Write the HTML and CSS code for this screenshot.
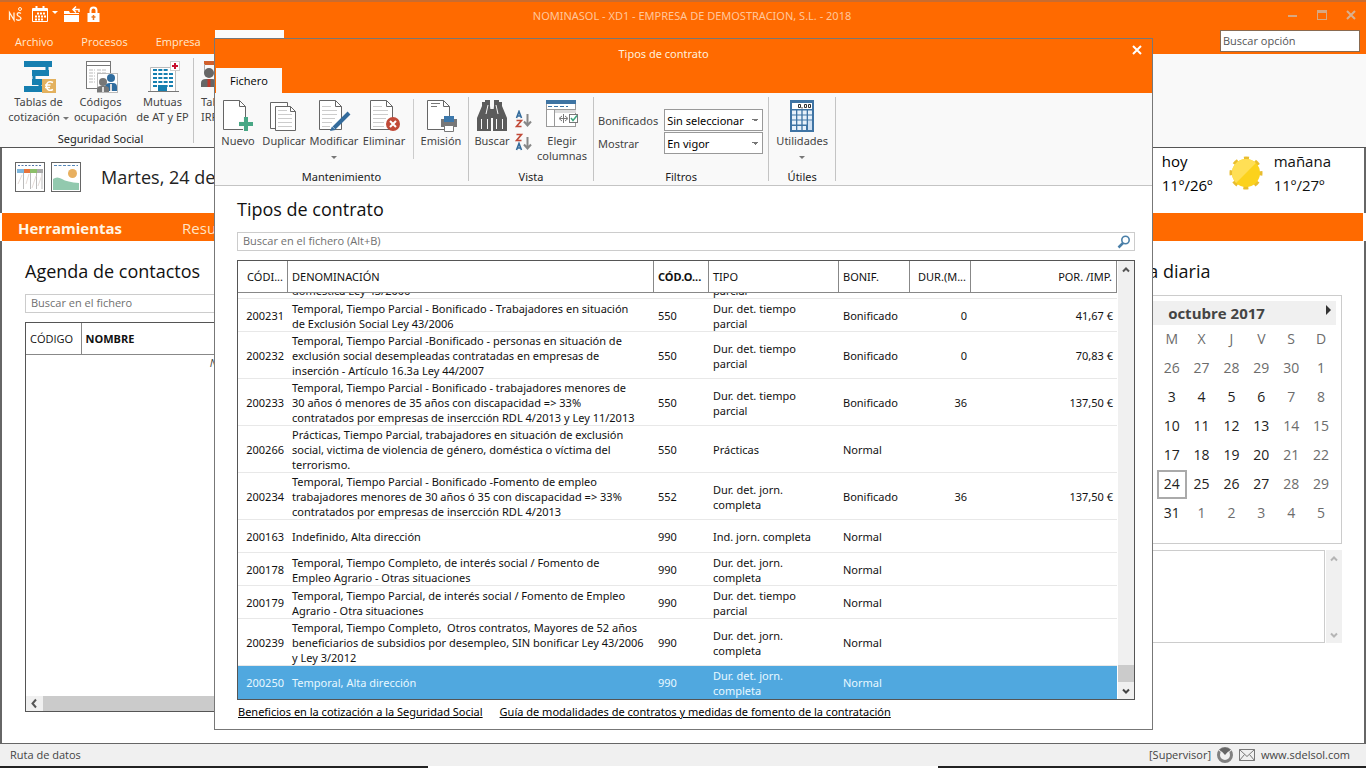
FILE: index.html
```html
<!DOCTYPE html>
<html lang="es">
<head>
<meta charset="utf-8">
<title>NOMINASOL - XD1 - EMPRESA DE DEMOSTRACION, S.L. - 2018</title>
<link rel="stylesheet" href="styles.css">
</head>
<body>
<div class="app">
  <header class="titlebar">
    <div class="quick">
      <svg width="16" height="18" viewBox="0 0 16 18" fill="none" stroke="#fff3df" stroke-width="1.3"><path d="M1.500 14V6.500L6 14V6.500M13 7.500C10 5.500 8 8 10 9.800C12 11 14 12 12.500 13.500C11 14.600 9 14 8.200 13.200"/><circle cx="12" cy="3" r="1.500" stroke-width="1"/></svg>
      <svg width="26" height="18" viewBox="0 0 26 18" fill="none" stroke="#fff"><path d="M.5 2.500h15v13H.5z"/><path d="M1 4h14M4.500 0v4M11.500 0v4" stroke-width="2"/><path d="M5 7.500h9M3 10.500h11M3 13.500h9" stroke-width="2" stroke-dasharray="2 1"/><path d="M20 5h6l-3 3z" fill="#fff" stroke="none"/></svg>
      <svg width="17" height="18" viewBox="0 0 17 18" fill="#fff"><path d="M0 16V5h5l1 2h9v9z"/><path d="M0 8.500h15" stroke="#ff6a00"/><path d="M15 6V3.500h-5M12 .5l-3 3 3 3" fill="none" stroke="#fff" stroke-width="1.500"/></svg>
      <svg width="13" height="18" viewBox="0 0 13 18"><path d="M3.500 8V4.500a3 3 0 0 1 6 0V8" fill="none" stroke="#fff" stroke-width="2"/><rect x="0.500" y="7" width="12" height="9" fill="#fff"/><path d="M6.500 9v5M4.500 11h4" stroke="#e87722" stroke-width="1.500"/></svg>
    </div>
    <h1 class="app-title">NOMINASOL - XD1 - EMPRESA DE DEMOSTRACION, S.L. - 2018</h1>
    <div class="win-buttons">
      <button type="button" aria-label="Minimizar"><svg width="10" height="10" viewBox="0 0 10 10"><path d="M0 6h9" stroke="#d8a882" stroke-width="2"/></svg></button>
      <button type="button" aria-label="Maximizar"><svg width="10" height="10" viewBox="0 0 10 10"><rect x=".5" y=".5" width="9" height="9" fill="none" stroke="#d8a882"/><path d="M0 1.500h10" stroke="#d8a882" stroke-width="3"/></svg></button>
      <button type="button" aria-label="Cerrar"><svg width="10" height="10" viewBox="0 0 10 10"><path d="M1 1l8 8M9 1l-8 8" stroke="#d8b090" stroke-width="2"/></svg></button>
    </div>
  </header>
  <nav class="menu">
    <a href="#">Archivo</a><a href="#">Procesos</a><a href="#">Empresa</a><a href="#" class="on">Entorno</a><a href="#">Impresión</a><a href="#">Utilidades</a><a href="#">Mi Asesoría</a><a href="#">Tienda</a>
    <input class="option-search" type="text" aria-label="Buscar opción" placeholder="Buscar opción">
  </nav>
  <section class="ribbon main-ribbon">
    <div class="group">
      <div class="tools">
        <button type="button" class="tool wide">
          <svg width="34" height="34" viewBox="0 0 34 34"><path d="M2 1h28v6H2zM10 10h17v6H10zM10 19h16v6H10zM2 26h18v6H2z" fill="#167fb0"/><path d="M25 7v3M12 16v3M18 25v2" stroke="#167fb0" stroke-width="3"/><rect x="20" y="19" width="14" height="14" fill="#e3b15e"/><path d="M31 22.500c-4-2-6.500 0-6.500 3.500s2.500 5.500 6.500 3.500M23 25h5.500M23 27.500h5" fill="none" stroke="#fff" stroke-width="1.500"/></svg>
          <span>Tablas de<br>cotización <i class="arrow"></i></span></button>
        <button type="button" class="tool wide">
          <svg width="34" height="34" viewBox="0 0 34 34"><rect x="2.500" y="1.500" width="24" height="27" fill="#fff" stroke="#777"/><path d="M3 5.500h23" stroke="#777"/><path d="M5 10h6M5 13h6M5 16h6M5 19h6M5 22h6M13 10h10M13 13h10M13 16h6" stroke="#bbb" stroke-dasharray="4 1"/><rect x="13.500" y="13.500" width="20" height="19" fill="#fff" stroke="#bbb"/><circle cx="27" cy="18" r="4" fill="#2f6c9e"/><path d="M21 31v-5q1-3 5-3h3q4 0 4 4v4z" fill="#2f6c9e"/><circle cx="19" cy="22" r="4" fill="#777"/><path d="M13 32v-3q0-3 4-3h4q4 0 4 3v3z" fill="#777"/><path d="M19 27v5M27 24v7" stroke="#ddd" stroke-width="2"/></svg>
          <span>Códigos<br>ocupación</span></button>
        <button type="button" class="tool wide">
          <svg width="34" height="34" viewBox="0 0 34 34"><path d="M4.500 31V7.500h25V31" fill="#fff" stroke="#bbb"/><path d="M7 10h15M7 14h20M7 18h20M7 22h20M7 26h20" stroke="#167fb0" stroke-width="2" stroke-dasharray="4 1.330"/><path d="M12 25h9v6h-9z" fill="#167fb0"/><path d="M2 31.500h31" stroke="#777"/><rect x="24.500" y="1.500" width="9" height="9" fill="#fff" stroke="#ccc"/><path d="M29 3v6M26 6h6" stroke="#c8102e" stroke-width="2"/></svg>
          <span>Mutuas<br>de AT y EP</span></button>
      </div>
      <div class="group-name">Seguridad Social</div>
    </div>
    <div class="group">
      <div class="tools">
        <button type="button" class="tool mid left">
          <svg width="34" height="34" viewBox="0 0 34 34"><path d="M3 1h29v4H3z" fill="#d0602c"/><path d="M3.500 4v9M31.500 4v28" stroke="#aaa"/><circle cx="8" cy="13" r="5" fill="#666"/><path d="M0 27v-4q0-4 5-4h6q5 0 5 4v4z" fill="#666"/><path d="M8 19v8" stroke="#c0392b" stroke-width="3"/></svg>
          <span>Tablas<br>IRPF</span></button>
      </div>
      <div class="group-name"></div>
    </div>
  </section>
  <section class="daybar">
    <button type="button" class="pic" aria-label="Calendario"><svg width="30" height="30" viewBox="0 0 30 30"><rect x=".5" y=".5" width="29" height="29" fill="#fff" stroke="#666"/><path d="M3 3.500h24" stroke="#57a" stroke-dasharray="2 1.500"/><path d="M2 7h7v4H2z" fill="#7db6dd"/><path d="M9 7h6v4H9z" fill="#e8743a"/><path d="M15 7h7v4h-7z" fill="#8cbf6a"/><path d="M22 7h6v4h-6z" fill="#aaa"/><path d="M8.500 11v16M15.500 11v16M21.500 11v16M27 11v16" stroke="#bbb"/><path d="M3 22l4-9M11 22l3-10M17 26l4-12M23 24l4-11" stroke="#e5dcd8"/></svg></button>
    <button type="button" class="pic" aria-label="Imagen"><svg width="30" height="30" viewBox="0 0 30 30"><rect x=".5" y=".5" width="29" height="29" fill="#fff" stroke="#666"/><path d="M3 3.500h24" stroke="#58b" stroke-dasharray="3 1.500"/><circle cx="21.500" cy="11.500" r="4.500" fill="#e8b060"/><path d="M2 28V17q4-3 9 0t17 4v7z" fill="#92c9ae"/></svg></button>
    <h2 class="date">Martes, 24 de octubre de 2017</h2>
    <div class="weather">
      <p class="today">hoy<br>11º/26º</p>
      <svg width="34" height="34" viewBox="0 0 34 34"><circle cx="17" cy="17" r="14.500" fill="none" stroke="#e9bd2e" stroke-width="4" stroke-dasharray="5 6.390" stroke-dashoffset="2.500"/><circle cx="17" cy="17" r="14" fill="#fcd21c"/><path d="M7.100 26.900A14 14 0 0 1 26.900 7.100z" fill="#ffdf55"/></svg>
      <p>mañana<br>11º/27º</p>
    </div>
  </section>
  <nav class="sections"><a href="#" class="on">Herramientas</a><a href="#">Resumen</a></nav>
  <main class="desk">
    <section class="contacts">
      <h2>Agenda de contactos</h2>
      <input class="file-search" type="text" aria-label="Buscar contactos" placeholder="Buscar en el fichero">
      <div class="contact-grid">
        <table>
          <thead><tr><th class="code">CÓDIGO</th><th class="strong">NOMBRE</th></tr></thead>
          <tbody><tr><td colspan="2">No existen contactos</td></tr></tbody>
        </table>
        <div class="hbar"><svg width="17" height="15" viewBox="0 0 17 15"><path d="M10 3.500L6.500 7.500l3.500 4" fill="none" stroke="#555" stroke-width="2"/></svg><div class="hthumb"></div></div>
      </div>
    </section>
    <section class="diary">
      <h2>Agenda diaria</h2>
      <div class="calendar">
        <div class="month"><span>octubre 2017</span><button type="button" aria-label="Mes siguiente"><svg width="6" height="16" viewBox="0 0 6 16"><path d="M0 0v10l5-5z" fill="#333"/></svg></button></div>
        <table>
          <thead><tr><th></th><th>L</th><th>M</th><th>X</th><th>J</th><th>V</th><th>S</th><th>D</th></tr></thead>
          <tbody>
            <tr class="out"><td>39</td><td>25</td><td>26</td><td>27</td><td>28</td><td>29</td><td>30</td><td>1</td></tr>
            <tr><td>40</td><td>2</td><td>3</td><td>4</td><td>5</td><td>6</td><td>7</td><td>8</td></tr>
            <tr><td>41</td><td>9</td><td>10</td><td>11</td><td>12</td><td>13</td><td>14</td><td>15</td></tr>
            <tr><td>42</td><td>16</td><td>17</td><td>18</td><td>19</td><td>20</td><td>21</td><td>22</td></tr>
            <tr><td>43</td><td>23</td><td class="now">24</td><td>25</td><td>26</td><td>27</td><td>28</td><td>29</td></tr>
            <tr class="last"><td>44</td><td>30</td><td>31</td><td>1</td><td>2</td><td>3</td><td>4</td><td>5</td></tr>
          </tbody>
        </table>
      </div>
      <div class="notes">
        <textarea aria-label="Notas del día"></textarea>
        <div class="vbar"><svg width="16" height="17" viewBox="0 0 16 17"><path d="M5 10.500L8 7.500l3 3" fill="none" stroke="#b5b5b5" stroke-width="2"/></svg><svg width="16" height="17" viewBox="0 0 16 17"><path d="M5 7.500l3 3 3-3" fill="none" stroke="#b5b5b5" stroke-width="2"/></svg></div>
      </div>
    </section>
  </main>
  <footer class="status">
    <span>Ruta de datos</span>
    <span class="user">[Supervisor]</span>
    <svg width="16" height="16" viewBox="0 0 16 16"><circle cx="8" cy="8" r="6.500" fill="none" stroke="#808080" stroke-width="3"/><path d="M3 2.500L8 8l5-5.500Q8-1 3 2.500z" fill="#666"/><path d="M1.500 2.500l3.500 4M14.500 2.500l-3.500 4" stroke="#f0f0f0"/></svg>
    <svg width="16" height="12" viewBox="0 0 16 12"><path d="M.5.5h15v11H.5zM.5.500L8 7.500l7.500-7M.5 11.500l5-6M15.500 11.500l-5-6" fill="none" stroke="#777"/></svg>
    <a href="#">www.sdelsol.com</a>
  </footer>
  <div class="taskbar"></div>
</div>

<div class="dialog" role="dialog" aria-labelledby="dialog-title">
  <header class="dialog-top">
    <h2 id="dialog-title">Tipos de contrato</h2>
    <button type="button" class="close" aria-label="Cerrar"><svg width="10" height="10" viewBox="0 0 10 10"><path d="M1 1l8 8M9 1l-8 8" stroke="#fff" stroke-width="2"/></svg></button>
  </header>
  <nav class="dialog-tabs"><a href="#">Fichero</a></nav>
  <section class="ribbon">
    <div class="group">
      <div class="tools">
        <button type="button" class="tool slim"><svg width="34" height="34" viewBox="0 0 34 34"><path d="M2.500 1.500h16l6 6v23h-22z" fill="#fff" stroke="#666"/><path d="M18.500 1.500v6h6" fill="none" stroke="#666"/><path d="M25 18v14M18 25h14" stroke="#f9f9f9" stroke-width="6"/><path d="M25 18v14M18 25h14" stroke="#48a785" stroke-width="4"/></svg><span>Nuevo</span></button>
        <button type="button" class="tool slim"><svg width="34" height="34" viewBox="0 0 34 34"><path d="M3.500 3.500h17v26h-17z" fill="#fff" stroke="#666"/><path d="M8.500 7.500h15l5 5v19h-20z" fill="#fff" stroke="#666"/><path d="M23.500 7.500v5h5" fill="none" stroke="#666"/><path d="M11 15.500h14M11 19.500h14M11 23.500h14M11 27.500h14M11 11.500h9" stroke="#ccc"/></svg><span>Duplicar</span></button>
        <button type="button" class="tool mid"><svg width="34" height="34" viewBox="0 0 34 34"><path d="M2.500 1.500h16l6 6v23h-22z" fill="#fff" stroke="#666"/><path d="M18.500 1.500v6h6" fill="none" stroke="#666"/><path d="M5 7.500h9M5 11.500h15M5 15.500h15M5 19.500h13M5 23.500h10M5 27.500h8" stroke="#ccc"/><path d="M32 14L17 29" stroke="#336b9c" stroke-width="4"/><path d="M15 27.500l3.500 3.500L13 32z" fill="#336b9c"/></svg><span>Modificar<br><i class="arrow"></i></span></button>
        <button type="button" class="tool slim"><svg width="34" height="34" viewBox="0 0 34 34"><path d="M3.500 1.500h16l6 6v23h-22z" fill="#fff" stroke="#666"/><path d="M19.500 1.500v6h6" fill="none" stroke="#666"/><path d="M6 7.500h9M6 11.500h15M6 15.500h15M6 19.500h13M6 23.500h11M6 27.500h11" stroke="#ccc"/><circle cx="26" cy="25" r="7" fill="#c14a38"/><path d="M23 22l6 6M29 22l-6 6" stroke="#fff" stroke-width="2"/></svg><span>Eliminar</span></button>
        <span class="line"></span>
        <button type="button" class="tool mid"><svg width="34" height="34" viewBox="0 0 34 34"><path d="M3.500 1.500h16l6 6v23h-22z" fill="#fff" stroke="#666"/><path d="M19.500 1.500v6h6" fill="none" stroke="#666"/><path d="M7 4.500h9M7 7.500h6" stroke="#777"/><path d="M17 20h16v8H17z" fill="#777"/><path d="M20 17h10v6H20z" fill="#3c78ab"/><path d="M20.500 26.500h9v6h-9z" fill="#fff" stroke="#777"/></svg><span>Emisión</span></button>
      </div>
      <div class="group-name">Mantenimiento</div>
    </div>
    <div class="group">
      <div class="tools view">
        <button type="button" class="tool slim"><svg width="34" height="34" viewBox="0 0 34 34" fill="#5b5b5b"><path d="M10 1h5v6l1 9v16H2V19L7 7V3h3zM19 1h5v2h3v4l5 12v13H18V16l1-9z"/><path d="M15 10h4v9h-4z"/><path d="M13 6l-2 9M21 6l2 9M6.500 20v10M12.500 20v10M21.500 20v10M27.500 20v10" stroke="#f9f9f9"/></svg><span>Buscar</span></button>
        <div class="sorts">
          <button type="button" aria-label="Orden ascendente"><svg width="18" height="18" viewBox="0 0 18 18" fill="none" stroke-width="1.600"><path d="M1.500 8L4 1.500 6.500 8M2.500 6h3" stroke="#336b9c"/><path d="M1.500 10.500h5l-5 6h5" stroke="#c14a38"/><path d="M12.500 4v11M9 11.500l3.500 4 3.500-4" stroke="#888" stroke-width="2"/></svg></button>
          <button type="button" aria-label="Orden descendente"><svg width="18" height="18" viewBox="0 0 18 18" fill="none" stroke-width="1.600"><path d="M1.500 1.500h5l-5 6h5" stroke="#c14a38"/><path d="M1.500 17L4 10.500 6.500 17M2.500 15h3" stroke="#336b9c"/><path d="M12.500 4v11M9 11.500l3.500 4 3.500-4" stroke="#888" stroke-width="2"/></svg></button>
        </div>
        <button type="button" class="tool mid"><svg width="34" height="34" viewBox="0 0 34 34"><rect x="1.500" y="1.500" width="29" height="26" fill="#fff" stroke="#999"/><path d="M1 1h30v4H1z" fill="#3e74a3"/><path d="M3 7.500h20" stroke="#3e74a3" stroke-dasharray="4 2"/><path d="M9 10h22v4H9z" fill="#ddd"/><path d="M1 10.500h30M9.500 11v16" stroke="#999"/><path d="M18.500 15v9M15 19.500h7M17 17l-3 2.500 3 2.500M20 17l3 2.500-3 2.500" fill="none" stroke="#777"/><rect x="24.500" y="15.500" width="8" height="8" fill="#fff" stroke="#777"/><path d="M26 19l2 2.500 4-5" fill="none" stroke="#3da37c" stroke-width="1.500"/></svg><span>Elegir<br>columnas</span></button>
      </div>
      <div class="group-name">Vista</div>
    </div>
    <div class="group">
      <div class="filters">
        <label for="bonus">Bonificados</label>
        <select id="bonus"><option>Sin seleccionar</option></select>
        <label for="show">Mostrar</label>
        <select id="show"><option>En vigor</option></select>
      </div>
      <div class="group-name">Filtros</div>
    </div>
    <div class="group">
      <div class="tools">
        <button type="button" class="tool util"><svg width="34" height="34" viewBox="0 0 34 34"><path d="M5 1h24v32H5z" fill="#3f74a4"/><path d="M7 4h20v6H7z" fill="#fff"/><path d="M13.500 5.500h2v3h-2zM19.500 5.500h2v3h-2zM23.500 5.500h2v3h-2z" fill="none" stroke="#333"/><path d="M17 8v1.500" stroke="#333"/><path d="M7 13.500h20M7 18.500h20M7 23.500h20M7 29h14" stroke="#e8f1fa" stroke-width="4" stroke-dasharray="4 1.330"/><path d="M23 22h4v9h-4z" fill="#cfe0f2"/></svg><span>Utilidades<br><i class="arrow"></i></span></button>
      </div>
      <div class="group-name">Útiles</div>
    </div>
  </section>
  <div class="dialog-body">
    <h2>Tipos de contrato</h2>
    <div class="search-row">
      <input type="text" aria-label="Buscar tipos de contrato" placeholder="Buscar en el fichero (Alt+B)">
      <svg width="14" height="14" viewBox="0 0 14 14" fill="none" stroke="#4a7fa8"><circle cx="8.500" cy="5" r="3.700" stroke-width="1.600"/><path d="M6 8L1.500 12.500" stroke-width="2.500"/></svg>
    </div>
    <div class="grid-frame">
      <div class="grid-scroll">
        <table class="grid">
          <colgroup><col class="c-code"><col><col class="c-off"><col class="c-type"><col class="c-bon"><col class="c-dur"><col class="c-imp"></colgroup>
          <thead><tr><th class="num">CÓDI...</th><th>DENOMINACIÓN</th><th class="strong">CÓD.O...</th><th>TIPO</th><th>BONIF.</th><th class="num">DUR.(M...</th><th class="num">POR. /IMP.</th></tr></thead>
          <tbody>
            <tr><td></td><td>Temporal, Tiempo Parcial - Bonificado - Violencia<br>doméstica Ley 43/2006</td><td></td><td>Dur. det. tiempo<br>parcial</td><td></td><td></td><td></td></tr>
            <tr><td class="num">200231</td><td>Temporal, Tiempo Parcial - Bonificado - Trabajadores en situación<br>de Exclusión Social Ley 43/2006</td><td>550</td><td>Dur. det. tiempo<br>parcial</td><td>Bonificado</td><td class="num">0</td><td class="num">41,67 €</td></tr>
            <tr><td class="num">200232</td><td>Temporal, Tiempo Parcial -Bonificado - personas en situación de<br>exclusión social desempleadas contratadas en empresas de<br>inserción - Artículo 16.3a Ley 44/2007</td><td>550</td><td>Dur. det. tiempo<br>parcial</td><td>Bonificado</td><td class="num">0</td><td class="num">70,83 €</td></tr>
            <tr><td class="num">200233</td><td>Temporal, Tiempo Parcial - Bonificado - trabajadores menores de<br>30 años ó menores de 35 años con discapacidad =&gt; 33%<br>contratados por empresas de insercción RDL 4/2013 y Ley 11/2013</td><td>550</td><td>Dur. det. tiempo<br>parcial</td><td>Bonificado</td><td class="num">36</td><td class="num">137,50 €</td></tr>
            <tr><td class="num">200266</td><td>Prácticas, Tiempo Parcial, trabajadores en situación de exclusión<br>social, victima de violencia de género, doméstica o víctima del<br>terrorismo.</td><td>550</td><td>Prácticas</td><td>Normal</td><td></td><td></td></tr>
            <tr><td class="num">200234</td><td>Temporal, Tiempo Parcial - Bonificado -Fomento de empleo<br>trabajadores menores de 30 años ó 35 con discapacidad =&gt; 33%<br>contratados por empresas de insercción RDL 4/2013</td><td>552</td><td>Dur. det. jorn.<br>completa</td><td>Bonificado</td><td class="num">36</td><td class="num">137,50 €</td></tr>
            <tr><td class="num">200163</td><td>Indefinido, Alta dirección</td><td>990</td><td>Ind. jorn. completa</td><td>Normal</td><td></td><td></td></tr>
            <tr><td class="num">200178</td><td>Temporal, Tiempo Completo, de interés social / Fomento de<br>Empleo Agrario - Otras situaciones</td><td>990</td><td>Dur. det. jorn.<br>completa</td><td>Normal</td><td></td><td></td></tr>
            <tr><td class="num">200179</td><td>Temporal, Tiempo Parcial, de interés social / Fomento de Empleo<br>Agrario - Otra situaciones</td><td>990</td><td>Dur. det. tiempo<br>parcial</td><td>Normal</td><td></td><td></td></tr>
            <tr><td class="num">200239</td><td>Temporal, Tiempo Completo,&nbsp; Otros contratos, Mayores de 52 años<br>beneficiarios de subsidios por desempleo, SIN bonificar Ley 43/2006<br>y Ley 3/2012</td><td>990</td><td>Dur. det. jorn.<br>completa</td><td>Normal</td><td></td><td></td></tr>
            <tr class="selected"><td class="num">200250</td><td>Temporal, Alta dirección</td><td>990</td><td>Dur. det. jorn.<br>completa</td><td>Normal</td><td></td><td></td></tr>
          </tbody>
        </table>
      </div>
      <div class="vbar"><svg width="16" height="17" viewBox="0 0 16 17"><path d="M5 10.500L8 7.500l3 3" fill="none" stroke="#555" stroke-width="2"/></svg><div class="vthumb"></div><svg width="16" height="17" viewBox="0 0 16 17"><path d="M5 7.500l3 3 3-3" fill="none" stroke="#444" stroke-width="2"/></svg></div>
    </div>
    <p class="links"><a href="#">Beneficios en la cotización a la Seguridad Social</a><a href="#">Guía de modalidades de contratos y medidas de fomento de la contratación</a></p>
  </div>
</div>
</body>
</html>
```
FILE: styles.css
```css
* { box-sizing: border-box; }
html, body { height: 100%; margin: 0; }
body { font: 11px/15px "Open Sans", "Noto Sans", sans-serif; color: #111; background: #fff; overflow: hidden; }
h1, h2, p { margin: 0; font-weight: 400; }
h2 { font-size: 18px; line-height: 26px; }
a { color: inherit; text-decoration: none; }
button { font: inherit; color: inherit; background: none; border: 0; padding: 0; }
input, select, textarea { font: inherit; color: #000; border: 1px solid #ccc; border-radius: 0; background: #fff; padding: 0 5px; outline: 0; }
input::placeholder { color: #707070; opacity: 1; }
svg { display: block; flex: none; }
table { border-collapse: collapse; }
th { font-weight: 400; text-align: left; }
.strong { font-weight: 700; }

.app { height: 100%; display: flex; flex-direction: column; }
.titlebar { display: flex; align-items: center; height: 30px; padding: 0 10px 2px 8px; background: #ff6a00; border-top: 2px solid #c86c30; flex: none; }
.quick, .win-buttons { flex: 1; display: flex; align-items: center; gap: 6px; }
.quick svg:first-child { margin-right: 2px; }
.win-buttons { justify-content: flex-end; gap: 19px; }
.app-title { font-family: "Noto Sans", sans-serif; font-size: 11px; color: #ffc79c; margin-left: 20px; }
.menu { display: flex; height: 24px; flex: none; background: #ff6a00; color: #ffe9cf; padding: 0 6px 0 1px; }
.menu a { padding: 4px 14px 0; }
.menu a.on { background: #fbfbfb; color: #000; }
.option-search { width: 140px; height: 22px; margin-left: auto; border-color: #8a6a50; padding: 0 2px 2px; }
.option-search::placeholder { color: #555; }

.ribbon { display: flex; height: 93px; padding: 4px 0; font-family: "Noto Sans", sans-serif; background: #f9f9f9; color: #444; border-bottom: 1px solid #c4c4c4; flex: none; }
.main-ribbon { height: 94px; border-bottom-color: #555; padding-left: 8px; }
.main-ribbon .tools { gap: 1px; }
.group { display: flex; flex-direction: column; border-right: 1px solid #c4c4c4; }
.tools { display: flex; flex: 1; align-items: flex-start; padding: 2px 0; }
.view { padding-right: 4px; }
.tool { display: flex; flex-direction: column; align-items: center; white-space: nowrap; }
.slim { width: 46px; }
.mid { width: 54px; }
.wide { width: 61px; }
.util { width: 66px; }
.left { align-items: flex-start; text-align: left; padding-left: 7px; }
.group-name { text-align: center; color: #222; line-height: 16px; min-height: 16px; margin-bottom: -4px; }
.arrow { display: inline-block; vertical-align: middle; border: 3px solid transparent; border-top-color: #777; border-bottom: 0; }
.line { width: 1px; height: 60px; background: #ccc; margin: 0 0 0 6px; }
.sorts { display: flex; flex-direction: column; gap: 5px; padding: 11px 2px 0 0; }
.filters { display: grid; grid-template-columns: auto 99px; gap: 1px 6px; padding: 12px 5px 0 4px; align-items: center; flex: 1; align-content: start; }
.filters select { height: 22px; padding: 0 2px; border-color: #999; appearance: none; background: #fff conic-gradient(from 315deg at 50% 100%, #777 90deg, transparent 0) no-repeat right 4px center / 6px 3px; background-image: linear-gradient(135deg, #777 50%, transparent 50%), linear-gradient(225deg, #777 50%, transparent 50%); background-position: right 4px center, right 7px center; background-size: 3px 3px; }

.daybar { display: flex; align-items: center; gap: 6px; height: 65px; padding: 0 33px 8px 13px; flex: none; border: solid #666; border-width: 0 2px; }
.date { margin-left: 14px; color: #222; }
.weather { display: flex; align-items: center; align-self: flex-start; margin-left: auto; gap: 11px; padding-top: 1px; font-size: 15px; line-height: 24px; }
.today { color: #000; margin-right: 5px; }
.sections { height: 28px; display: flex; align-items: center; flex: none; background: #ff6a00; color: #ffe4c4; font-size: 15px; margin: 0 3px 0 2px; padding: 2px 16px 0; gap: 60px; }
.sections .on { font-weight: 700; color: #fff6e6; }
.desk { flex: 1; min-height: 0; display: flex; justify-content: space-between; padding: 17px 22px 31px 23px; border: 2px solid #666; border-top: 0; border-bottom-width: 1px; }
.contacts { width: 470px; display: flex; flex-direction: column; }
.file-search { height: 19px; margin: 10px 0 9px; padding-bottom: 2px; }
.contact-grid { flex: 1; border: 1px solid #555; display: flex; flex-direction: column; justify-content: space-between; }
.contact-grid table { width: 100%; }
.contact-grid th { height: 31px; padding: 0 4px; border-bottom: 1px solid #888; }
.contact-grid .code { width: 55px; border-right: 1px solid #888; }
.contact-grid td { text-align: center; font-style: italic; color: #444; padding: 0; }
.hbar { display: flex; height: 15px; background: #f0f0f0; }
.hthumb { flex: 1; background: #cbcbcb; margin-right: 16px; }
.diary { width: 251px; }
.diary h2 { padding-left: 4px; }
.calendar { border: 1px solid #ccc; margin-top: 11px; padding: 5px 5px 15px; color: #222; }
.month { display: flex; align-items: center; background: #f0f0f0; height: 24px; font-size: 15px; font-weight: 700; color: #444; padding: 0 4px 0 10px; }
.month span { flex: 1; text-align: center; }
.calendar table { width: 100%; table-layout: fixed; font-size: 14px; line-height: 18px; }
.calendar th, .calendar td { height: 29px; text-align: center; padding: 0 0 1px; }
.calendar th, .calendar td:nth-child(n+7), .calendar .out td, .calendar .last td:nth-child(n+4) { color: #6c6c6c; }
.calendar .now { outline: 2px solid #aaa; outline-offset: -2px; }
.notes { display: flex; height: 93px; margin-top: 6px; gap: 1px; }
.notes textarea { flex: 1; min-width: 0; resize: none; }
.vbar { width: 16px; flex: none; display: flex; flex-direction: column; justify-content: space-between; background: #f0f0f0; }
.status { display: flex; align-items: center; gap: 6px; height: 22px; padding: 0 16px 1px 10px; background: #f0f0f0; color: #444; flex: none; }
.user { margin-left: auto; }
.taskbar { height: 2px; flex: none; background: linear-gradient(90deg, #222 31.3%, #fff 31.3%, #fff 68.7%, #222 68.7%); }

.dialog { position: absolute; top: 38px; right: 213px; bottom: 38px; left: 214px; display: flex; flex-direction: column; background: #fff; border: 1px solid #777; }
.dialog-top { display: flex; align-items: center; height: 29px; background: #ff6a00; color: #fff0dc; flex: none; padding-right: 10px; }
.dialog-top h2 { flex: 1; text-align: center; font: 11px/15px "Noto Sans", sans-serif; padding-right: 20px; }
.close { align-self: flex-start; padding-top: 6px; }
.dialog-tabs { display: flex; background: #ff6a00; height: 25px; flex: none; padding-left: 1px; }
.dialog-tabs a { background: #f9f9f9; color: #000; padding: 5px 14px 0; }
.dialog-body { flex: 1; min-height: 0; display: flex; flex-direction: column; padding: 10px 17px 10px 22px; }
.search-row { display: flex; align-items: center; border: 1px solid #ccc; height: 19px; margin: 10px 0 9px; padding-right: 3px; flex: none; }
.search-row input { flex: 1; border: 0; height: 17px; padding-bottom: 2px; }
.grid-frame { flex: 1; min-height: 0; display: flex; border: 1px solid #555; }
.grid-frame .vbar { margin: 0 0 0 1px; }
.grid-scroll { flex: 1; display: flex; flex-direction: column-reverse; overflow: hidden; }
.grid { width: 100%; table-layout: fixed; border-collapse: separate; border-spacing: 0; flex: none; font-family: "Noto Sans", sans-serif; }
.c-code { width: 50px; }
.c-off { width: 55px; }
.c-type { width: 130px; }
.c-bon { width: 71px; }
.c-dur { width: 61px; }
.c-imp { width: 146px; }
.grid th { position: sticky; top: 0; height: 32px; background: #fff; border: 1px solid #888; border-width: 0 1px 1px 0; padding: 0 4px; white-space: nowrap; }
.grid td { height: 33px; padding: 1px 0 0 4px; border-bottom: 1px solid #e8e8e8; white-space: nowrap; }
.grid .num { text-align: right; padding-right: 4px; padding-left: 0; }
.grid .selected td { background: #50a8df; color: #e8f8ff; border-color: #50a8df; }
.vthumb { height: 17px; background: #cbcbcb; margin-top: auto; }
.links { display: flex; gap: 17px; padding: 4px 0 0 1px; color: #000; font-family: "Noto Sans", sans-serif; }
.links a { text-decoration: underline; }
```
